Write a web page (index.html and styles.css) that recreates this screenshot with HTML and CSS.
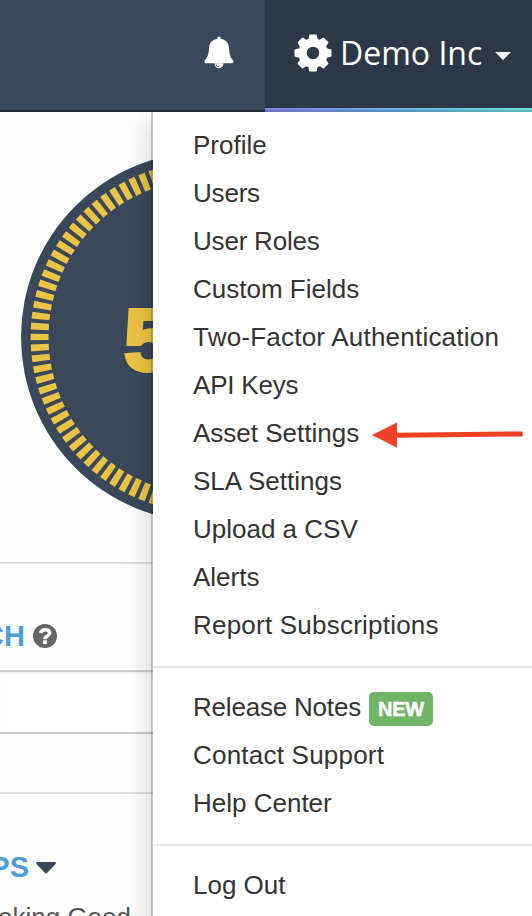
FILE: index.html
```
<!DOCTYPE html>
<html lang="en">
  <head>
    <meta charset="UTF-8" />
    <meta name="viewport" content="width=device-width, initial-scale=1.0" />
    <title>Demo Inc</title>
    <link rel="stylesheet" href="styles.css">
  </head>
  <body>
    <header class="navbar">
      <a class="nav-bell" href="#" aria-label="Notifications">
        <svg width="30" height="34" viewBox="0 0 30 34">
          <path fill="#fff" d="M15 0.6c1.1 0 1.9.8 1.8 2.1 5 .9 7.900 4.200 8.200 9.100.3 6 .8 9.300 4.300 12.800.5 1.800-.4 2.700-1.700 2.700H2.200c-1.400 0-2.100-1.100-1.700-2.700 3.700-3.500 4.200-6.800 4.500-12.800.3-4.900 3.300-8.200 8.200-9.100C13.100 1.400 13.900.6 15 .6z" />
          <path fill="#fff" d="M10.600 27.200h8.800c-.1 3.200-1.900 5-4.400 5s-4.300-1.800-4.400-5z" />
          <path fill="none" stroke="#39495b" stroke-width="0.8" d="M12.100 28.100c0 1.700 1.200 2.800 3 2.800" />
        </svg>
      </a>
      <a class="nav-account" href="#">
        <svg class="gear" width="38" height="38" viewBox="-19 -19 38 38">
          <circle r="10.500" fill="none" stroke="#fff" stroke-width="8.500" />
          <g fill="#fff">
            <path id="tooth" d="M-5-12L-3.800-17.800Q-3.700-18.500-3-18.500H3Q3.700-18.500 3.800-17.800L5-12z" />
            <use href="#tooth" transform="rotate(45)" />
            <use href="#tooth" transform="rotate(90)" />
            <use href="#tooth" transform="rotate(135)" />
            <use href="#tooth" transform="rotate(180)" />
            <use href="#tooth" transform="rotate(225)" />
            <use href="#tooth" transform="rotate(270)" />
            <use href="#tooth" transform="rotate(315)" />
          </g>
        </svg>
        <span class="account-name">Demo Inc</span>
        <span class="caret"></span>
      </a>
    </header>

    <main>
      <section class="score">
        <svg class="gauge" width="370" height="370" viewBox="-185 -185 370 370">
          <circle r="185" fill="#39495b" />
          <circle class="ticks" r="166.400" pathLength="1000" />
          <text x="-82" y="33">5</text>
        </svg>
      </section>
      <section class="panel-heading">
        <span class="panel-title search-title">SEARCH</span>
        <svg width="24" height="24" viewBox="0 0 24 24">
          <circle cx="12" cy="12" r="12" fill="#666" />
          <path fill="none" stroke="#fff" stroke-width="3.600" d="M7.600 9.100C8.300 6.700 9.900 5.800 12.300 5.800c2.600 0 4.200 1.300 4.200 3.200 0 3.200-4.500 3-4.500 6.200" />
          <path fill="#fff" d="M10 16.300h4v3.700h-4z" />
        </svg>
      </section>
      <section class="panel-body"></section>
      <section class="spacer"></section>
      <section class="groups">
        <div class="groups-heading">
          <span class="panel-title groups-title">GROUPS</span>
          <svg width="20" height="12" viewBox="0 0 20 12">
            <path fill="#39495b" d="M1 0h18q1.600.6.500 2L11 11q-1 1-2 0L.5 2Q-.6.600 1 0z" />
          </svg>
        </div>
        <p class="status">Looking Good</p>
      </section>
    </main>

    <nav class="dropdown-menu">
      <ul>
        <li><a href="#">Profile</a></li>
        <li class="tight"><a href="#">Users</a></li>
        <li class="tight"><a href="#">User Roles</a></li>
        <li><a href="#">Custom Fields</a></li>
        <li class="loose"><a href="#">Two-Factor Authentication</a></li>
        <li class="tight"><a href="#">API Keys</a></li>
        <li>
          <a href="#">Asset Settings</a>
          <svg class="arrow" width="152" height="26" viewBox="0 0 152 26">
            <path fill="#ee4023" d="M0 13L25 0.500v10.300L150.700 9.400v5L25 15.700v10z" />
          </svg>
        </li>
        <li><a href="#">SLA Settings</a></li>
        <li><a href="#">Upload a CSV</a></li>
        <li><a href="#">Alerts</a></li>
        <li class="loose"><a href="#">Report Subscriptions</a></li>
      </ul>
      <ul>
        <li class="tight"><a href="#">Release Notes</a><span class="badge">NEW</span></li>
        <li class="loose"><a href="#">Contact Support</a></li>
        <li><a href="#">Help Center</a></li>
      </ul>
      <ul>
        <li><a href="#">Log Out</a></li>
      </ul>
    </nav>
  </body>
</html>
```
FILE: styles.css
```
* {
  box-sizing: border-box;
}
body {
  margin: 0;
  height: 916px;
  position: relative;
  overflow: hidden;
  background-color: #fcfcfc;
  font-family: "Liberation Sans", Arial, sans-serif;
  font-size: 26px;
  color: #333;
}
a {
  color: inherit;
  text-decoration: none;
}
ul {
  list-style: none;
  margin: 0;
  padding: 0;
}

/* top bar */
.navbar {
  display: flex;
  height: 112px;
  background-color: #39495b;
  box-shadow: inset 0 -2px 0 #232d3a;
}
.nav-bell {
  width: 265px;
  padding: 36px 0 0 204px;
}
.nav-account {
  flex: 1;
  display: flex;
  align-items: center;
  padding: 0 0 7px 29px;
  color: #fff;
  background-image: linear-gradient(to top, rgba(0, 0, 0, 0.15) 2px, transparent 2px),
    linear-gradient(to right, #857fe3, #6aaae0 45%, #68e0d8);
  box-shadow: inset 0 108px 0 #2c3848;
}
.account-name {
  margin-left: 8px;
  font-family: "Open Sans", "Noto Sans", sans-serif;
  font-size: 32px;
  line-height: 44px;
  white-space: nowrap;
}
.caret {
  margin: 6px 0 0 13px;
  border: 8px solid transparent;
  border-top-color: #fff;
  border-bottom: 0;
}

/* page behind the menu */
.score {
  height: 452px;
  padding: 40px 0 0 21px;
  border-bottom: 2px solid #ddd;
}
.gauge {
  display: block;
}
.gauge text {
  font-size: 88px;
  font-weight: bold;
  fill: #ebc444;
  stroke: #ebc444;
  stroke-width: 4px;
}
.ticks {
  fill: none;
  stroke: #ebc444;
  stroke-width: 18;
  stroke-dasharray: 6.200 3.800;
  stroke-dashoffset: 3.100;
}
.panel-heading {
  display: flex;
  align-items: center;
  height: 108px;
  padding-top: 37px;
  border-bottom: 2px solid #ccc;
}
.panel-title {
  display: flex;
  justify-content: flex-end;
  font-size: 29px;
  font-weight: bold;
  color: #4f9bd9;
}
.search-title {
  width: 25px;
  margin: 2px 8px 0 0;
}
.panel-body {
  height: 62px;
  background-color: #fff;
  border-bottom: 2px solid #ccc;
  box-shadow: inset 0 2px 2px rgba(0, 0, 0, 0.05);
}
.spacer {
  height: 60px;
  border-bottom: 2px solid #ddd;
}
.groups {
  padding-top: 57px;
}
.groups-heading {
  display: flex;
  align-items: center;
}
.groups-title {
  width: 29px;
  margin-right: 7px;
}
.status {
  display: flex;
  justify-content: flex-end;
  width: 131px;
  margin: 18px 0 0;
  color: #555;
  white-space: nowrap;
}

/* account menu */
.dropdown-menu {
  position: absolute;
  top: 112px;
  left: 151px;
  right: -20px;
  height: 840px;
  padding-top: 9px;
  background-color: #fff;
  background-clip: padding-box;
  border-left: 2px solid rgba(0, 0, 0, 0.2);
  box-shadow: 0 12px 24px rgba(0, 0, 0, 0.175);
  clip-path: inset(0 0 0 -40px);
}
.dropdown-menu ul + ul {
  margin-top: 17px;
  padding-top: 15px;
  border-top: 2px solid #e5e5e5;
}
.dropdown-menu li {
  display: flex;
  align-items: center;
  height: 48px;
  padding-left: 40px;
  white-space: nowrap;
}
.dropdown-menu .tight {
  letter-spacing: -0.2px;
}
.dropdown-menu .loose {
  letter-spacing: 0.22px;
}
.arrow {
  margin: 4px 0 0 13px;
}
.badge {
  height: 34px;
  margin: 4px 0 0 8px;
  padding: 0 9px;
  border-radius: 5px;
  background-color: #70b465;
  color: #fff;
  font-size: 20px;
  font-weight: bold;
  line-height: 34px;
  -webkit-text-stroke: 0.5px #fff;
}
```
